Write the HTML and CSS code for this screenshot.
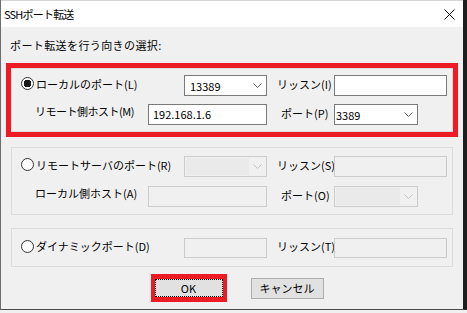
FILE: index.html
```html
<!DOCTYPE html>
<html lang="ja">
<head>
  <meta charset="UTF-8">
  <title>SSHポート転送</title>
  <link rel="stylesheet" href="styles.css">
</head>
<body>

<div class="window">
  <div class="titlebar">
    <span class="title">SSHポート転送</span>
    <svg class="close" width="11" height="11" viewBox="0 0 11 11">
      <path d="M0.5 0.5 L10.5 10.5 M10.5 0.5 L0.5 10.5" stroke="#000" stroke-width="1" fill="none"/>
    </svg>
  </div>

  <div class="dialog">
    <p class="caption">ポート転送を行う向きの選択:</p>

    <!-- local -->
    <div class="group g1 marked">
      <div class="row">
        <span class="opt"><span class="radio checked"></span>ローカルのポート(L)</span>
        <div class="combo w83 pad5">
          <span class="val">13389</span>
          <span class="arrow"><svg width="9" height="5" viewBox="0 0 9 5"><polyline points="0.5,0.5 4.5,4.5 8.5,0.5"/></svg></span>
        </div>
        <span class="lbl">リッスン(I)</span>
        <div class="edit w113"></div>
      </div>
      <div class="row">
        <span class="sub tight">リモート側ホスト(M)</span>
        <div class="edit w119">192.168.1.6</div>
        <span class="lbl port">ポート(P)</span>
        <div class="combo w84 pad1">
          <span class="val">3389</span>
          <span class="arrow"><svg width="9" height="5" viewBox="0 0 9 5"><polyline points="0.5,0.5 4.5,4.5 8.5,0.5"/></svg></span>
        </div>
      </div>
    </div>

    <!-- remote -->
    <div class="group g2">
      <div class="row">
        <span class="opt"><span class="radio"></span>リモートサーバのポート(R)</span>
        <div class="combo w83 off">
          <span class="val"></span>
          <span class="arrow"><svg width="9" height="5" viewBox="0 0 9 5"><polyline points="0.5,0.5 4.5,4.5 8.5,0.5"/></svg></span>
        </div>
        <span class="lbl">リッスン(S)</span>
        <div class="edit w113 off"></div>
      </div>
      <div class="row">
        <span class="sub">ローカル側ホスト(A)</span>
        <div class="edit w119 off"></div>
        <span class="lbl port">ポート(O)</span>
        <div class="combo w84 off">
          <span class="val"></span>
          <span class="arrow"><svg width="9" height="5" viewBox="0 0 9 5"><polyline points="0.5,0.5 4.5,4.5 8.5,0.5"/></svg></span>
        </div>
      </div>
    </div>

    <!-- dynamic -->
    <div class="group g3">
      <div class="row">
        <span class="opt"><span class="radio"></span>ダイナミックポート(D)</span>
        <div class="edit w83 off"></div>
        <span class="lbl">リッスン(T)</span>
        <div class="edit w113 off"></div>
      </div>
    </div>

    <div class="buttons">
      <div class="ok-mark"><button class="btn ok">OK</button></div>
      <button class="btn">キャンセル</button>
    </div>
  </div>
</div>

</body>
</html>
```

FILE: styles.css
```css
* {
  box-sizing: border-box;
}

html, body {
  margin: 0;
}

body {
  width: 467px;
  height: 313px;
  overflow: hidden;
  background: #f0f0f0;
  color: #000;
  font-family: "Noto Sans CJK JP", sans-serif;
  font-size: 11px;
}

.window {
  width: 467px;
  height: 310px;
  background: #f0f0f0;
  border-left: 1px solid #6d6d6d;
  border-right: 4px solid #1e1e1e;
  border-bottom: 1px solid #4a4a4a;
  display: flex;
  flex-direction: column;
}

.titlebar {
  height: 27px;
  flex: none;
  background: #fff;
  border-top: 1px solid #d4d4d4;
  display: flex;
  align-items: center;
  justify-content: space-between;
  padding: 0 8px 0 3px;
}

.title {
  letter-spacing: -0.8px;
}

.close {
  display: block;
}

.dialog {
  padding-left: 10px;
}

.caption {
  margin: 10px 0 0 -1px;
  line-height: 16px;
  letter-spacing: 0.4px;
}

.group {
  width: 442px;
  border: 1px solid #dcdcdc;
  display: flex;
  flex-direction: column;
}

.g1 {
  margin-top: 15px;
  padding: 6px 0 6px;
  gap: 8px;
}

.marked {
  outline: 5px solid #ed1c24;
}

.g2 {
  margin-top: 15px;
  padding: 8px 0 7px;
  gap: 9px;
}

.g3 {
  margin-top: 13px;
  padding: 9px 0 8px;
}

.g3 .row {
  height: 20px;
}

.row {
  display: flex;
  align-items: center;
  height: 21px;
}

.opt {
  width: 172px;
  padding-left: 9px;
  display: flex;
  align-items: center;
  margin-bottom: 4px;
  white-space: nowrap;
}

.sub {
  width: 113px;
  margin-left: 23px;
  margin-bottom: 7px;
  white-space: nowrap;
}

.tight {
  letter-spacing: -0.5px;
}

.lbl {
  width: 67px;
  padding-left: 10px;
  margin-bottom: 4px;
  white-space: nowrap;
}

.lbl.port {
  padding-left: 14px;
}

.radio {
  width: 13px;
  height: 13px;
  border: 1px solid #333;
  border-radius: 50%;
  background: #fff;
  margin-right: 2px;
  flex: none;
}

.radio.checked {
  background: radial-gradient(circle, #1a1a1a 0 3.6px, #fff 4px);
}

.edit,
.combo {
  height: 100%;
  border: 1px solid #7a7a7a;
  background: #fff;
}

.edit {
  padding-left: 4px;
  line-height: 19px;
}

.combo {
  display: flex;
  align-items: center;
}

.combo .val {
  flex: 1;
}

.pad5 {
  padding-left: 5px;
}

.pad1 {
  padding-left: 1px;
}

.arrow {
  width: 17px;
  display: flex;
  justify-content: center;
  align-items: center;
}

.arrow svg {
  display: block;
  fill: none;
  stroke: #606060;
}

.off {
  border-color: #cccccc;
  background: #f0f0f0;
}

.combo.off .val {
  align-self: stretch;
  margin: 1px 0 1px 1px;
  background: #eaeaea;
}

.combo.off .arrow svg {
  stroke: #c4c4c4;
}

.w83 { width: 83px; }
.w84 { width: 84px; }
.w113 { width: 113px; }
.w119 { width: 119px; }

.buttons {
  margin-top: 7px;
  width: 452px;
  height: 28px;
  display: flex;
  align-items: center;
  justify-content: center;
  gap: 24px;
}

.btn {
  font: inherit;
  color: #000;
  width: 73px;
  height: 21px;
  padding: 0;
  border: 1px solid #adadad;
  background: #e1e1e1;
}

.ok-mark {
  width: 76px;
  height: 28px;
  border-style: solid;
  border-color: #ed1c24;
  border-width: 5px 4px;
}

.btn.ok {
  width: 100%;
  height: 100%;
  border: 1px dotted #000;
}
```
